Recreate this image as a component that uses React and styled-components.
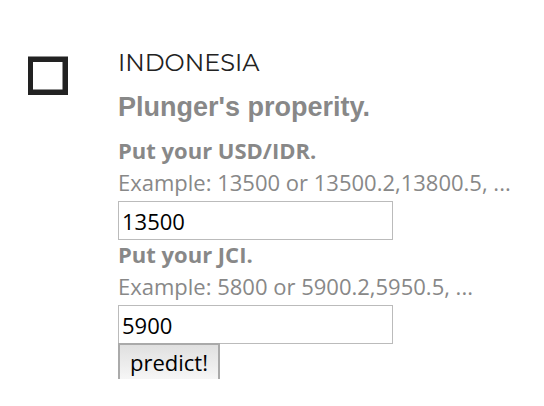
import React from "react";
import styled, { createGlobalStyle } from "styled-components";

const GlobalStyle = createGlobalStyle`
  body { margin: 0; background: #fff; }
  *, *::before, *::after { box-sizing: border-box; }
`;

const Section = styled.section`
  display: flex;
  gap: 50px;
  padding: 47px 24px 28px 28px;
  color: #888;
  font-family: "Open Sans", sans-serif;
`;

const Marker = styled.svg`
  flex: none;
  width: 40px;
  height: 39px;
  margin-top: 9px;
`;

const Content = styled.div`
  flex: 1;
  min-width: 0;
`;

const Country = styled.h2`
  margin: 0;
  color: #222;
  font: 400 24px/32px Montserrat, "Open Sans", sans-serif;
`;

const Title = styled.h3`
  margin: 12px 0 13px;
  font: 700 27px/32px "Liberation Sans", Arial, sans-serif;
`;

const Form = styled.form`
  display: flex;
  flex-direction: column;
  align-items: flex-start;
`;

const Label = styled.label`
  font-size: 22px;
  font-weight: 700;
  line-height: 28px;
`;

const Hint = styled.span`
  font-size: 22px;
  line-height: 36px;
  white-space: nowrap;
`;

const Input = styled.input`
  width: 100%;
  max-width: 275px;
  height: 39px;
  margin: 1px 0 0;
  padding: 3px 3px 2px;
  border: 1px solid #bbb;
  border-radius: 0;
  background: #fff;
  color: #000;
  font: 400 22px/32px "Open Sans", sans-serif;
`;

const Button = styled.button`
  height: 36px;
  margin: -1px 0 0;
  padding: 0 10px;
  border: 2px solid #aaa;
  border-bottom: 0;
  border-radius: 0;
  background: linear-gradient(#e0e0e0, #f6f6f6);
  color: #000;
  font: 400 22px/32px "Open Sans", sans-serif;
`;

function Field({ id, label, hint, value }) {
  return (
    <>
      <Label htmlFor={id}>{label}</Label>
      <Hint id={`${id}-hint`}>{hint}</Hint>
      <Input id={id} aria-describedby={`${id}-hint`} defaultValue={value} />
    </>
  );
}

export default function App() {
  return (
    <>
      <GlobalStyle />
      <Section>
        <Marker viewBox="0 0 40 39" aria-hidden="true">
          <path d="M0 .5H40V39H0ZM5 6V33.5H34.5V6Z" fill="#222" fillRule="evenodd" />
        </Marker>
        <Content>
          <Country>INDONESIA</Country>
          <Title>Plunger's properity.</Title>
          <Form onSubmit={(e) => e.preventDefault()}>
            <Field id="usd" label="Put your USD/IDR." hint="Example: 13500 or 13500.2,13800.5, ..." value="13500" />
            <Field id="jci" label="Put your JCI." hint="Example: 5800 or 5900.2,5950.5, ..." value="5900" />
            <Button type="submit">predict!</Button>
          </Form>
        </Content>
      </Section>
    </>
  );
}
